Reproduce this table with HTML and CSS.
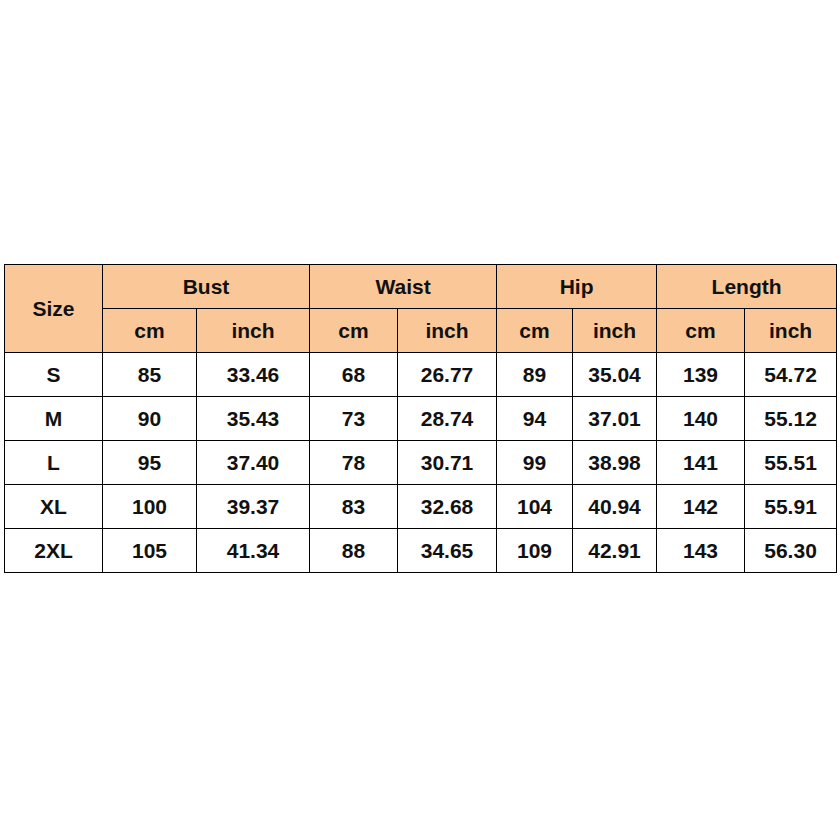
FILE: index.html
```html
<!DOCTYPE html>
<html>
<head>
<meta charset="utf-8">
<link rel="stylesheet" href="styles.css">
</head>
<body>
<div class="page">
<table class="size-table">
<colgroup>
<col class="c-size"><col class="c-bust-cm"><col class="c-bust-in"><col class="c-waist-cm"><col class="c-waist-in"><col class="c-hip-cm"><col class="c-hip-in"><col class="c-len-cm"><col class="c-len-in">
</colgroup>
<thead>
<tr><th rowspan="2">Size</th><th colspan="2">Bust</th><th colspan="2">Waist</th><th colspan="2">Hip</th><th colspan="2">Length</th></tr>
<tr><th>cm</th><th>inch</th><th>cm</th><th>inch</th><th>cm</th><th>inch</th><th>cm</th><th>inch</th></tr>
</thead>
<tbody>
<tr><td>S</td><td>85</td><td>33.46</td><td>68</td><td>26.77</td><td>89</td><td>35.04</td><td>139</td><td>54.72</td></tr>
<tr><td>M</td><td>90</td><td>35.43</td><td>73</td><td>28.74</td><td>94</td><td>37.01</td><td>140</td><td>55.12</td></tr>
<tr><td>L</td><td>95</td><td>37.40</td><td>78</td><td>30.71</td><td>99</td><td>38.98</td><td>141</td><td>55.51</td></tr>
<tr><td>XL</td><td>100</td><td>39.37</td><td>83</td><td>32.68</td><td>104</td><td>40.94</td><td>142</td><td>55.91</td></tr>
<tr><td>2XL</td><td>105</td><td>41.34</td><td>88</td><td>34.65</td><td>109</td><td>42.91</td><td>143</td><td>56.30</td></tr>
</tbody>
</table>
</div>
</body>
</html>
```
FILE: styles.css
```css
html, body {
  margin: 0;
  padding: 0;
  background: #ffffff;
}
.page {
  width: 840px;
  height: 840px;
  box-sizing: border-box;
  padding: 264px 0 0 4px;
}
.size-table {
  border-collapse: collapse;
  table-layout: fixed;
  width: 833px;
  font-family: "Liberation Sans", Arial, sans-serif;
  font-weight: bold;
  font-size: 21px;
  color: #111111;
}
.c-size { width: 98px; }
.c-bust-cm { width: 94px; }
.c-bust-in { width: 113px; }
.c-waist-cm { width: 88px; }
.c-waist-in { width: 99px; }
.c-hip-cm { width: 76px; }
.c-hip-in { width: 84px; }
.c-len-cm { width: 88px; }
.c-len-in { width: 92px; }
.size-table th,
.size-table td {
  border: 1px solid #000000;
  height: 43px;
  padding: 0;
  text-align: center;
  vertical-align: middle;
  font-weight: bold;
}
.size-table th {
  background: #fac898;
}
.size-table td {
  background: #ffffff;
}
```
